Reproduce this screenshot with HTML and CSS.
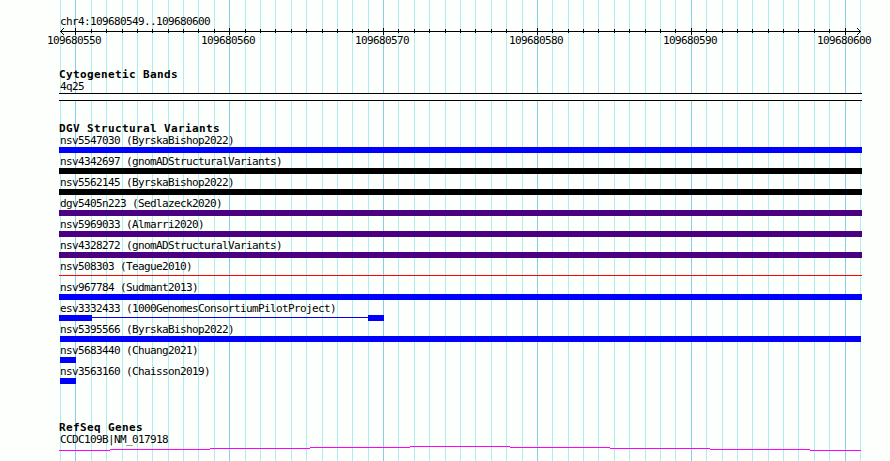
FILE: index.html
```html
<!DOCTYPE html>
<html>
	<head>
		<title>chr4:109680549..109680600</title>
		<meta charset="UTF-8">
		<link rel="stylesheet" href="styles.css">
	</head>
	<body>

		<!-- Vertical grid, one line per base -->
		<svg id="grid" width="890" height="461">
			<path class="minor" d="M60 0h1v461h-1zM91 0h1v461h-1zM106 0h1v461h-1zM122 0h1v461h-1zM137 0h1v461h-1zM152 0h1v461h-1zM168 0h1v461h-1zM183 0h1v461h-1zM198 0h1v461h-1zM214 0h1v461h-1z
				M245 0h1v461h-1zM260 0h1v461h-1zM275 0h1v461h-1zM291 0h1v461h-1zM306 0h1v461h-1zM322 0h1v461h-1zM337 0h1v461h-1zM352 0h1v461h-1zM368 0h1v461h-1z
				M398 0h1v461h-1zM414 0h1v461h-1zM429 0h1v461h-1zM445 0h1v461h-1zM460 0h1v461h-1zM475 0h1v461h-1zM491 0h1v461h-1zM506 0h1v461h-1zM522 0h1v461h-1z
				M552 0h1v461h-1zM568 0h1v461h-1zM583 0h1v461h-1zM598 0h1v461h-1zM614 0h1v461h-1zM629 0h1v461h-1zM645 0h1v461h-1zM660 0h1v461h-1zM675 0h1v461h-1z
				M706 0h1v461h-1zM722 0h1v461h-1zM737 0h1v461h-1zM752 0h1v461h-1zM768 0h1v461h-1zM783 0h1v461h-1zM798 0h1v461h-1zM814 0h1v461h-1zM829 0h1v461h-1zM860 0h1v461h-1z"/>
			<path class="major" d="M75 0h1v461h-1zM229 0h1v461h-1zM383 0h1v461h-1zM537 0h1v461h-1zM691 0h1v461h-1zM845 0h1v461h-1z"/>
		</svg>

		<div id="tracks">
			<div class="ruler">
				<div class="label">chr4:109680549..109680600</div>
				<svg class="scale" width="830" height="7" viewBox="59 28 830 7">
					<path d="M60 31h801v1h-801z"/>
					<path d="M61 30h1v3h-1zM62 29h1v1h-1zM62 33h1v1h-1zM63 28h1v1h-1zM63 34h1v1h-1z"/>
					<path d="M859 30h1v3h-1zM858 29h1v1h-1zM858 33h1v1h-1zM857 28h1v1h-1zM857 34h1v1h-1z"/>
					<path d="M91 29h1v4h-1zM106 29h1v4h-1zM122 29h1v4h-1zM137 29h1v4h-1zM152 29h1v4h-1zM168 29h1v4h-1zM183 29h1v4h-1zM198 29h1v4h-1zM214 29h1v4h-1z
						M245 29h1v4h-1zM260 29h1v4h-1zM275 29h1v4h-1zM291 29h1v4h-1zM306 29h1v4h-1zM322 29h1v4h-1zM337 29h1v4h-1zM352 29h1v4h-1zM368 29h1v4h-1z
						M398 29h1v4h-1zM414 29h1v4h-1zM429 29h1v4h-1zM445 29h1v4h-1zM460 29h1v4h-1zM475 29h1v4h-1zM491 29h1v4h-1zM506 29h1v4h-1zM522 29h1v4h-1z
						M552 29h1v4h-1zM568 29h1v4h-1zM583 29h1v4h-1zM598 29h1v4h-1zM614 29h1v4h-1zM629 29h1v4h-1zM645 29h1v4h-1zM660 29h1v4h-1zM675 29h1v4h-1z
						M706 29h1v4h-1zM722 29h1v4h-1zM737 29h1v4h-1zM752 29h1v4h-1zM768 29h1v4h-1zM783 29h1v4h-1zM798 29h1v4h-1zM814 29h1v4h-1zM829 29h1v4h-1z"/>
					<path d="M75 28h1v7h-1zM229 28h1v7h-1zM383 28h1v7h-1zM537 28h1v7h-1zM691 28h1v7h-1zM845 28h1v7h-1z"/>
				</svg>
				<div class="positions">
					<span>109680550</span>
					<span>109680560</span>
					<span>109680570</span>
					<span>109680580</span>
					<span>109680590</span>
					<span>109680600</span>
				</div>
			</div>

			<div class="track cytobands">
				<div class="title">Cytogenetic Bands</div>
				<div class="label">4q25</div>
				<div class="band"></div>
			</div>

			<div class="track variants">
				<div class="title">DGV Structural Variants</div>
				<div class="row"><div class="label">nsv5547030 (ByrskaBishop2022)</div><div class="bar gain"></div></div>
				<div class="row"><div class="label">nsv4342697 (gnomADStructuralVariants)</div><div class="bar other"></div></div>
				<div class="row"><div class="label">nsv5562145 (ByrskaBishop2022)</div><div class="bar other"></div></div>
				<div class="row"><div class="label">dgv5405n223 (Sedlazeck2020)</div><div class="bar inversion"></div></div>
				<div class="row"><div class="label">nsv5969033 (Almarri2020)</div><div class="bar inversion"></div></div>
				<div class="row"><div class="label">nsv4328272 (gnomADStructuralVariants)</div><div class="bar inversion"></div></div>
				<div class="row"><div class="label">nsv508303 (Teague2010)</div><div class="line loss"></div></div>
				<div class="row"><div class="label">nsv967784 (Sudmant2013)</div><div class="bar gain"></div></div>
				<div class="row">
					<div class="label">esv3332433 (1000GenomesConsortiumPilotProject)</div>
					<div class="split">
						<div class="bar gain start"></div>
						<div class="line gain"></div>
						<div class="bar gain end"></div>
					</div>
				</div>
				<div class="row"><div class="label">nsv5395566 (ByrskaBishop2022)</div><div class="bar gain inset"></div></div>
				<div class="row"><div class="label">nsv5683440 (Chuang2021)</div><div class="bar gain short"></div></div>
				<div class="row"><div class="label">nsv3563160 (Chaisson2019)</div><div class="bar gain short"></div></div>
			</div>

			<div class="track genes">
				<div class="title">RefSeq Genes</div>
				<div class="label">CCDC109B|NM_017918</div>
				<svg class="intron" width="803" height="5" viewBox="59 446 803 5">
					<path d="M59 450h51v1h-51zM110 449h100v1h-100zM210 448h100v1h-100zM310 447h100v1h-100zM410 446h100v1h-100zM510 447h100v1h-100zM610 448h100v1h-100zM710 449h100v1h-100zM810 450h51v1h-51z"/>
				</svg>
			</div>
		</div>

	</body>
</html>
```

FILE: styles.css
```css
body {
	margin: 0px;
	height: 461px;
	overflow: hidden;
	background-color: #fdfffc;
	color: black;
	font-family: "DejaVu Sans Mono", monospace;
	font-size: 11px;
	line-height: 13px;
}

svg {
	display: block;
	shape-rendering: crispEdges;
}

#grid {
	position: absolute;
	left: 0px;
	top: 0px;
	z-index: -1;
}
#grid .minor {
	fill: #afeeee;
}
#grid .major {
	fill: #87ceeb;
}

#tracks {
	width: 803px;
	padding-top: 15px;
	margin-left: 59px;
}

/* 6px per character */
.label,
.positions {
	height: 13px;
	letter-spacing: -0.622px;
	white-space: nowrap;
}
.label {
	padding-left: 1px;
}

/* 7px per character */
.title {
	height: 12px;
	font-weight: bold;
	letter-spacing: 0.378px;
	white-space: nowrap;
}

.scale {
	overflow: visible;
}
.positions {
	display: flex;
	gap: 100px;
	margin-top: -1px;
	margin-left: -12px;
}
.positions span {
	flex: none;
	width: 54px;
}

.cytobands {
	margin-top: 21px;
}
.band {
	height: 6px;
	border-top: 1px solid black;
	border-bottom: 1px solid black;
	background-color: #fdfffc;
}

.variants {
	margin-top: 21px;
}
.row {
	height: 21px;
}
.bar {
	height: 6px;
}
.line {
	height: 1px;
	margin-top: 2px;
}
.gain {
	background-color: #0000ff;
}
.loss {
	background-color: #ff0000;
}
.inversion {
	background-color: #4b0082;
}
.other {
	background-color: #000000;
}
.inset {
	width: 801px;
	margin-left: 1px;
}
.short {
	width: 16px;
	margin-left: 1px;
}

.split {
	display: flex;
	width: 325px;
}
.split .start {
	width: 33px;
}
.split .line {
	flex: 1;
}
.split .end {
	width: 16px;
}

.genes {
	margin-top: 35px;
}
.intron {
	fill: #ff00ff;
}
```
